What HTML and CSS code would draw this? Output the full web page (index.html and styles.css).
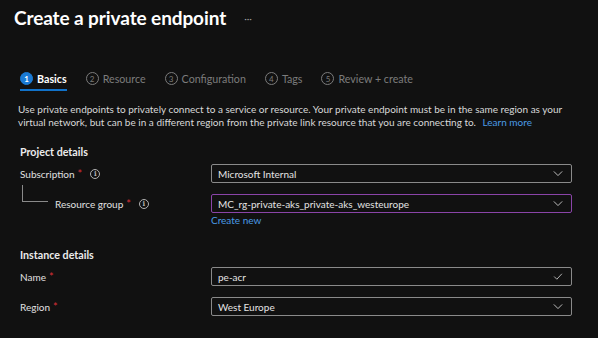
FILE: index.html
```html
<!DOCTYPE html>
<html lang="en">
<head>
    <meta charset="UTF-8">
    <meta name="viewport" content="width=device-width, initial-scale=1.0">
    <title>Create a private endpoint</title>
    <link rel="stylesheet" href="styles.css">
</head>
<body>
    <div class="page">
        <div class="title-row">
            <h1>Create a private endpoint</h1>
            <span class="more">···</span>
        </div>

        <div class="steps">
            <div class="step active"><span class="num">1</span>Basics</div>
            <div class="step"><span class="num">2</span>Resource</div>
            <div class="step"><span class="num">3</span>Configuration</div>
            <div class="step"><span class="num">4</span>Tags</div>
            <div class="step"><span class="num">5</span>Review + create</div>
        </div>

        <p class="intro">Use private endpoints to privately connect to a service or resource. Your private endpoint must be in the same region as your virtual network, but can be in a different region from the private link resource that you are connecting to. <a href="#">Learn more</a></p>

        <h2>Project details</h2>
        <div class="field">
            <div class="label">Subscription <span class="req">*</span> <span class="info">i</span></div>
            <div class="box">
                <span>Microsoft Internal</span>
                <svg class="chev" viewBox="0 0 12 8"><path d="M1 1.5l5 5 5-5" /></svg>
            </div>
        </div>
        <div class="field sub">
            <div class="label"><span class="tree"></span>Resource group <span class="req">*</span> <span class="info">i</span></div>
            <div>
                <div class="box focus">
                    <span>MC_rg-private-aks_private-aks_westeurope</span>
                    <svg class="chev" viewBox="0 0 12 8"><path d="M1 1.5l5 5 5-5" /></svg>
                </div>
                <a href="#" class="create">Create new</a>
            </div>
        </div>

        <h2 class="instance">Instance details</h2>
        <div class="field">
            <div class="label">Name <span class="req">*</span></div>
            <div class="box">
                <span>pe-acr</span>
                <svg class="chev" viewBox="0 0 12 9"><path d="M1 4.5l3.5 3.5 6.5-7" /></svg>
            </div>
        </div>
        <div class="field">
            <div class="label">Region <span class="req">*</span></div>
            <div class="box">
                <span>West Europe</span>
                <svg class="chev" viewBox="0 0 12 8"><path d="M1 1.5l5 5 5-5" /></svg>
            </div>
        </div>
    </div>
</body>
</html>
```

FILE: styles.css
```css
* { margin: 0; padding: 0; box-sizing: border-box; }
body {
    font-family: Lato, "Open Sans", sans-serif;
    background: #111111;
    color: #d8d8d8;
    font-size: 10px;
}
.page { padding: 4px 0 0 14px; }

.title-row { display: flex; align-items: center; gap: 18px; height: 26px; }
.title-row h1 { font-size: 19px; font-weight: 700; color: #ffffff; letter-spacing: -0.1px; }
.title-row .more { color: #9a9a9a; font-size: 10px; margin-top: 2px; }

.steps { display: flex; gap: 19px; margin: 42px 0 0 6px; }
.step {
    display: flex; align-items: center; gap: 4px;
    color: #7c7c7c; font-size: 10.7px; padding-bottom: 4px;
    border-bottom: 2px solid transparent;
}
.step .num {
    width: 13px; height: 13px; border-radius: 50%;
    border: 1px solid #7c7c7c; font-size: 8px;
    display: flex; align-items: center; justify-content: center;
}
.step.active { color: #ffffff; font-weight: 700; border-bottom-color: #1172c9; }
.step.active .num { background: #1a7ad4; border-color: #1a7ad4; color: #fff; }

.intro { margin: 12px 0 0 4px; width: 560px; line-height: 13px; color: #d8d8d8; }
.intro a, .create { color: #4a9be6; text-decoration: none; }
.intro a { margin-left: 4px; }

h2 { font-size: 10.7px; font-weight: 700; color: #ececec; margin: 16px 0 0 6px; }
h2.instance { margin-top: 22px; }

.field { display: grid; grid-template-columns: 191px 361px; margin: 6px 0 0 6px; align-items: start; }
.field + .field { margin-top: 11px; }
.field.sub { margin-top: 11px; }
.label { display: flex; align-items: center; height: 19px; gap: 4px; color: #e0e0e0; }
.sub .label { padding-left: 35px; position: relative; }
.tree {
    position: absolute; left: 2px; top: -9px; width: 26px; height: 17px;
    border-left: 1px solid #8a8a8a; border-bottom: 1px solid #8a8a8a;
}
.req { color: #d62f37; margin-left: -1px; font-size: 11px; }
.info {
    width: 10px; height: 10px; border-radius: 50%; border: 1px solid #b0b0b0;
    color: #b0b0b0; font-size: 7px; font-weight: 700;
    display: inline-flex; align-items: center; justify-content: center; margin-left: 4px;
    font-family: "DejaVu Serif", serif;
}

.box {
    height: 19px; border: 1px solid #8a8a8a; border-radius: 2px;
    display: flex; align-items: center; justify-content: space-between;
    padding: 0 8px 0 6px; color: #e4e4e4; background: #111111;
}
.box.focus { border-color: #8a44a8; }
.chev { width: 10px; height: 7px; fill: none; stroke: #bdbdbd; stroke-width: 1.2; }
.create { display: block; margin-top: 1px; }
```
